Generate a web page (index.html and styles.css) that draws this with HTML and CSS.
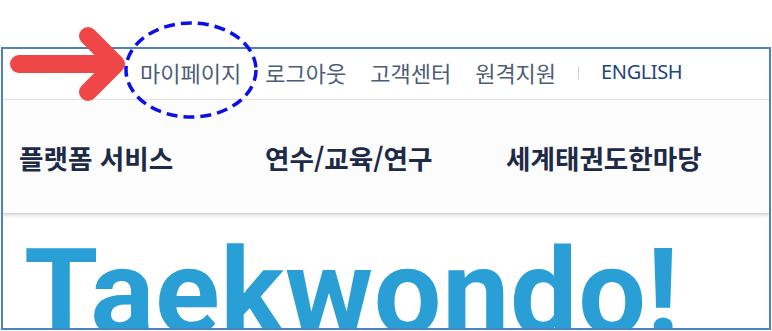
FILE: index.html
```html
<!DOCTYPE html>
<html lang="ko">
<head>
<meta charset="utf-8">
<title>Taekwondo</title>
<link rel="stylesheet" href="styles.css">
</head>
<body>
<div class="frame">
  <header class="util">
    <ul class="util-links">
      <li><a href="#">마이페이지</a></li>
      <li><a href="#">로그아웃</a></li>
      <li><a href="#">고객센터</a></li>
      <li><a href="#">원격지원</a></li>
      <li class="sep"></li>
      <li class="en"><a href="#">ENGLISH</a></li>
    </ul>
  </header>
  <nav class="gnb">
    <ul>
      <li>플랫폼 서비스</li>
      <li>연수/교육/연구</li>
      <li>세계태권도한마당</li>
    </ul>
  </nav>
  <section class="hero">
    <h1>Taekwondo!</h1>
  </section>
</div>
<svg class="annot" width="772" height="331" viewBox="0 0 772 331" xmlns="http://www.w3.org/2000/svg">
  <g fill="none" stroke="#ef4647" stroke-width="18" stroke-linecap="round" stroke-linejoin="round">
    <path d="M19 64 L114 64"/>
    <path d="M88 36 L116 64 L88 92"/>
  </g>
  <ellipse cx="191" cy="70" rx="65" ry="47" fill="none" stroke="#0a10e8" stroke-width="3.5" stroke-dasharray="11 6"/>
</svg>
</body>
</html>
```
FILE: styles.css
```css
html, body {
  margin: 0;
  padding: 0;
}
body {
  position: relative;
  width: 772px;
  height: 331px;
  overflow: hidden;
  background: #ffffff;
  font-family: "Noto Sans CJK KR", "Noto Sans", sans-serif;
}
ul {
  list-style: none;
  margin: 0;
  padding: 0;
}
a {
  text-decoration: none;
  color: inherit;
}
.frame {
  margin: 47px 0 0 1px;
  width: 770px;
  height: 283px;
  box-sizing: border-box;
  border: 2px solid #4f81bd;
  overflow: hidden;
  background: #ffffff;
}
.util {
  height: 50px;
  box-sizing: content-box;
  border-bottom: 1px solid #e2e2e2;
  display: flex;
  align-items: center;
  padding-left: 137px;
}
.util-links {
  display: flex;
  align-items: center;
  gap: 24px;
  padding-bottom: 5px;
}
.util-links li {
  font-size: 22px;
  line-height: 1;
  color: #4d5d78;
}
.util-links .sep {
  width: 1px;
  height: 12px;
  margin: 3px -2px 0;
  background: #c9c9c9;
}
.util-links .en {
  font-family: "Noto Sans", sans-serif;
  font-size: 20px;
  letter-spacing: -0.4px;
  color: #23457c;
}
.gnb {
  height: 113px;
  background: #fcfcfc;
  border-bottom: 1px solid #d4d4d4;
  box-shadow: 0 2px 3px rgba(0, 0, 0, 0.12);
  position: relative;
  display: flex;
  align-items: center;
}
.gnb ul {
  display: grid;
  grid-template-columns: 246px 241px auto;
  padding: 4px 0 0 16px;
}
.gnb li {
  font-size: 26.6px;
  line-height: 1;
  font-weight: 700;
  color: #1d2b48;
}
.hero {
  padding: 19px 0 0 21px;
}
.hero h1 {
  margin: 0;
  font-family: "Roboto", "Liberation Sans", sans-serif;
  font-weight: 700;
  font-size: 120px;
  line-height: 120px;
  letter-spacing: 0.6px;
  color: #299fd6;
}
.annot {
  position: absolute;
  left: 0;
  top: 0;
  pointer-events: none;
}
```
